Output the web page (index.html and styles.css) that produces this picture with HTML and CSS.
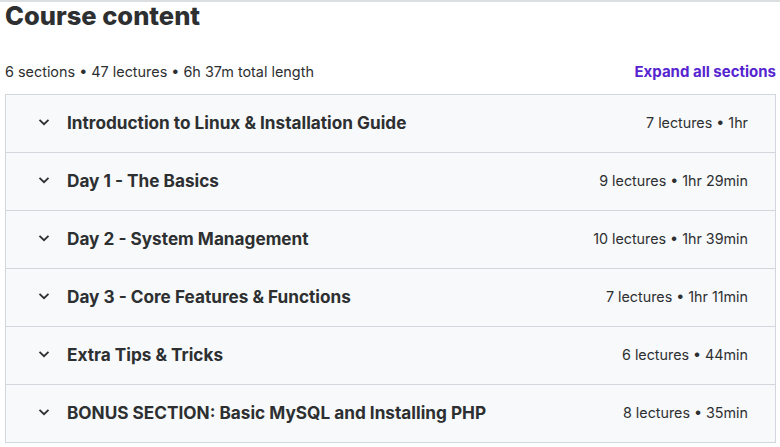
FILE: index.html
```html
<!DOCTYPE html>
<html lang="en">
<head>
  <meta charset="UTF-8">
  <meta name="viewport" content="width=device-width, initial-scale=1.0">
  <title>Course content</title>
  <link rel="stylesheet" href="styles.css">
</head>
<body>
  <div class="course-content">
    <h2 class="title">Course content</h2>
    <div class="summary">
      <span>6 sections • 47 lectures • 6h 37m total length</span>
      <button class="expand-btn">Expand all sections</button>
    </div>
    <div class="sections">
      <div class="section">
        <svg class="chevron" viewBox="0 0 12 8"><path d="M1.5 1.8 6 6.2 10.5 1.8"/></svg>
        <span class="section-title">Introduction to Linux &amp; Installation Guide</span>
        <span class="section-info">7 lectures • 1hr</span>
      </div>
      <div class="section">
        <svg class="chevron" viewBox="0 0 12 8"><path d="M1.5 1.8 6 6.2 10.5 1.8"/></svg>
        <span class="section-title">Day 1 - The Basics</span>
        <span class="section-info">9 lectures • 1hr 29min</span>
      </div>
      <div class="section">
        <svg class="chevron" viewBox="0 0 12 8"><path d="M1.5 1.8 6 6.2 10.5 1.8"/></svg>
        <span class="section-title">Day 2 - System Management</span>
        <span class="section-info">10 lectures • 1hr 39min</span>
      </div>
      <div class="section">
        <svg class="chevron" viewBox="0 0 12 8"><path d="M1.5 1.8 6 6.2 10.5 1.8"/></svg>
        <span class="section-title">Day 3 - Core Features &amp; Functions</span>
        <span class="section-info">7 lectures • 1hr 11min</span>
      </div>
      <div class="section">
        <svg class="chevron" viewBox="0 0 12 8"><path d="M1.5 1.8 6 6.2 10.5 1.8"/></svg>
        <span class="section-title">Extra Tips &amp; Tricks</span>
        <span class="section-info">6 lectures • 44min</span>
      </div>
      <div class="section">
        <svg class="chevron" viewBox="0 0 12 8"><path d="M1.5 1.8 6 6.2 10.5 1.8"/></svg>
        <span class="section-title">BONUS SECTION: Basic MySQL and Installing PHP</span>
        <span class="section-info">8 lectures • 35min</span>
      </div>
    </div>
  </div>
</body>
</html>
```

FILE: styles.css
```css
body {
  margin: 0;
  border-top: 2px solid #dcdfe2;
  font-family: Inter, "Noto Sans", sans-serif;
  color: #2d2f31;
  background: #fff;
}
.course-content {
  width: 771px;
  padding-left: 5px;
}
.title {
  margin: 0;
  font-size: 25.5px;
  font-weight: 800;
  line-height: 28px;
}
.summary {
  display: flex;
  justify-content: space-between;
  align-items: center;
  margin-top: 27px;
  height: 30px;
  font-size: 14.4px;
}
.summary span {
  padding-bottom: 2px;
}
.expand-btn {
  border: none;
  background: none;
  padding: 0 0 2px;
  font-family: inherit;
  font-size: 15px;
  font-weight: 700;
  color: #5624d0;
  cursor: pointer;
}
.sections {
  margin-top: 7px;
  border: 1px solid #d1d7dc;
  border-bottom: none;
}
.section {
  display: flex;
  align-items: center;
  box-sizing: border-box;
  height: 58px;
  padding: 0 27px 3px 32px;
  background: #f7f9fa;
  border-bottom: 1px solid #d1d7dc;
}
.chevron {
  width: 12px;
  height: 8px;
  fill: none;
  stroke: #2d2f31;
  stroke-width: 1.8;
  margin-right: 17px;
}
.section-title {
  flex: 1;
  font-size: 17.2px;
  font-weight: 700;
}
.section-info {
  font-size: 14.3px;
}
```
